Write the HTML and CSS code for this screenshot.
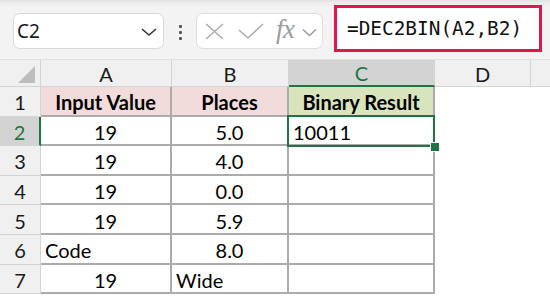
FILE: index.html
```html
<!DOCTYPE html>
<html>
<head>
<meta charset="utf-8">
<link rel="stylesheet" href="styles.css">
</head>
<body>
<div class="app">
  <div class="toolbar">
    <div class="namebox">
      <span class="nb-text">C2</span>
      <svg class="nb-chev" width="16" height="10" viewBox="0 0 16 10"><polyline points="1,2 8,8 15,2" fill="none" stroke="#333" stroke-width="1.6"/></svg>
    </div>
    <div class="dots"><i></i><i></i><i></i></div>
    <div class="fbtns">
      <svg class="ic-x" width="19" height="17" viewBox="0 0 19 17"><path d="M1 1 L18 16 M18 1 L1 16" stroke="#ababab" stroke-width="1.5" fill="none"/></svg>
      <svg class="ic-check" width="26" height="17" viewBox="0 0 26 17"><polyline points="1,7 10,15 25,1" fill="none" stroke="#ababab" stroke-width="1.5"/></svg>
      <span class="fx">fx</span>
      <svg class="ic-chev" width="15" height="9" viewBox="0 0 15 9"><polyline points="1,1.5 7.5,7.5 14,1.5" fill="none" stroke="#9a9a9a" stroke-width="1.4"/></svg>
    </div>
    <div class="formula">=DEC2BIN(A2,B2)</div>
  </div>
  <div class="sheet">
    <div class="hd corner"><svg width="40" height="28" viewBox="0 0 40 28"><polygon points="35,7 35,24 18,24" fill="#bdbdbd"/></svg></div>
    <div class="hd col">A</div>
    <div class="hd col">B</div>
    <div class="hd col sel">C</div>
    <div class="hd col">D</div>
    <div class="hd col last"></div>

    <div class="hd row">1</div>
    <div class="c t pink bold ctr">Input Value</div>
    <div class="c t pink bold ctr">Places</div>
    <div class="c t green bold ctr">Binary Result</div>
    <div class="c"></div>
    <div class="c"></div>

    <div class="hd row sel">2</div>
    <div class="c t ctr">19</div>
    <div class="c t ctr">5.0</div>
    <div class="c t active">10011<span class="selbox"><span class="handle"></span></span></div>
    <div class="c"></div>
    <div class="c"></div>

    <div class="hd row">3</div>
    <div class="c t ctr">19</div>
    <div class="c t ctr">4.0</div>
    <div class="c t"></div>
    <div class="c"></div>
    <div class="c"></div>

    <div class="hd row">4</div>
    <div class="c t ctr">19</div>
    <div class="c t ctr">0.0</div>
    <div class="c t"></div>
    <div class="c"></div>
    <div class="c"></div>

    <div class="hd row">5</div>
    <div class="c t ctr">19</div>
    <div class="c t ctr">5.9</div>
    <div class="c t"></div>
    <div class="c"></div>
    <div class="c"></div>

    <div class="hd row">6</div>
    <div class="c t">Code</div>
    <div class="c t ctr">8.0</div>
    <div class="c t"></div>
    <div class="c"></div>
    <div class="c"></div>

    <div class="hd row">7</div>
    <div class="c t ctr">19</div>
    <div class="c t">Wide</div>
    <div class="c t"></div>
    <div class="c"></div>
    <div class="c"></div>
  </div>
</div>
</body>
</html>
```
FILE: styles.css
```css
* { box-sizing: border-box; }
html, body { margin: 0; padding: 0; background: #fff; }
.app { width: 550px; height: 298px; overflow: hidden; font-family: Lato, "Liberation Sans", sans-serif; }

.toolbar {
  height: 60px;
  background: linear-gradient(#e2e2e2 0, #efefef 4px, #f3f3f3 8px);
  display: flex;
  align-items: flex-start;
  padding-top: 5px;
  border-bottom: 1px solid #e2e2e2;
}
.namebox {
  margin: 8px 0 0 13px;
  width: 151px; height: 36px;
  background: #fff;
  border: 1px solid #d9d9d9;
  border-radius: 7px;
  display: flex; align-items: center; justify-content: space-between;
  padding: 0 6px 0 3px;
}
.nb-text { font-family: "Noto Sans", "Open Sans", sans-serif; font-size: 19px; color: #1a1a1a; }
.nb-chev { margin-top: 2px; }
.dots { margin: 20px 0 0 15px; width: 3px; display: flex; flex-direction: column; gap: 3px; }
.dots i { display: block; width: 3px; height: 3px; background: #555; border-radius: 1px; }
.fbtns {
  margin: 8px 0 0 14px;
  width: 127px; height: 36px;
  background: #fff;
  border: 1px solid #dedede;
  border-radius: 7px;
  display: flex; align-items: center;
  padding-left: 8px;
}
.ic-check { margin-left: 14px; }
.fx { margin-left: 12px; font-family: "Liberation Serif", serif; font-style: italic; font-size: 27px; color: #9c9c9c; line-height: 1; margin-top: -4px; letter-spacing: -0.5px; }
.ic-chev { margin-left: 7px; margin-top: 2px; }
.formula {
  margin-left: 11px;
  width: 208px; height: 47px;
  background: #fff;
  border: 3px solid #e0174a;
  display: flex; align-items: center;
  padding-left: 10px;
  font-family: "DejaVu Sans Mono", monospace;
  font-size: 19.4px;
  color: #111;
}

.sheet {
  display: grid;
  grid-template-columns: 41px 131px 117px 146px 96px 19px;
  grid-template-rows: 27px repeat(7, 29.6px);
  font-size: 20px;
  color: #000;
}
.hd {
  background: #f0f0f0;
  border-right: 1px solid #d4d4d4;
  border-bottom: 1px solid #d4d4d4;
  display: flex; align-items: center; justify-content: center;
  font-size: 20px; color: #1a1a1a;
}
.corner svg { display: block; }
.hd.col { padding-top: 1px; }
.hd.last { border-right: none; }
.hd.col.sel { background: #d3d3d3; border-bottom: 2px solid #217346; color: #217346; }
.hd.row { padding-top: 2px; }
.hd.row.sel { background: #d3d3d3; border-right: 2px solid #217346; color: #217346; }

.c { display: flex; align-items: center; padding: 3px 4px 0; white-space: nowrap; }
.c.t { border-right: 2px solid #ababab; border-bottom: 2px solid #ababab; }
.ctr { justify-content: center; }
.bold { font-weight: 700; }
.pink { background: #f2dcdb; }
.green { background: #d8e4bc; }
.active { position: relative; }
.selbox {
  position: absolute;
  left: -2px; top: -2px; right: -2px; bottom: -3px;
  border: 2px solid #217346;
}
.handle {
  position: absolute;
  right: -6px; bottom: -6px;
  width: 8px; height: 8px;
  background: #217346;
  box-shadow: 0 0 0 1px #fff;
}
```
